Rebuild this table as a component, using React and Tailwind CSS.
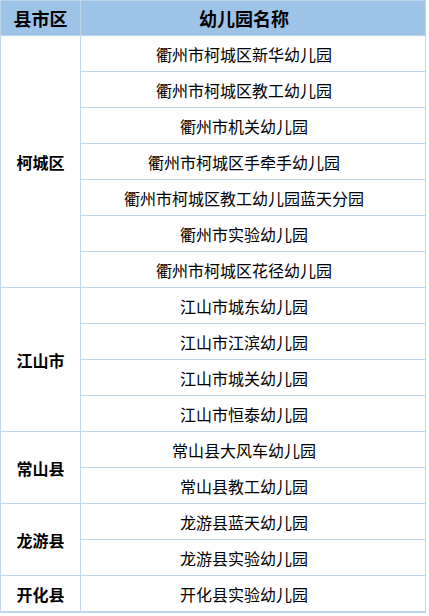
const groups = [
  { name: "柯城区", items: ["衢州市柯城区新华幼儿园", "衢州市柯城区教工幼儿园", "衢州市机关幼儿园", "衢州市柯城区手牵手幼儿园", "衢州市柯城区教工幼儿园蓝天分园", "衢州市实验幼儿园", "衢州市柯城区花径幼儿园"] },
  { name: "江山市", items: ["江山市城东幼儿园", "江山市江滨幼儿园", "江山市城关幼儿园", "江山市恒泰幼儿园"] },
  { name: "常山县", items: ["常山县大风车幼儿园", "常山县教工幼儿园"] },
  { name: "龙游县", items: ["龙游县蓝天幼儿园", "龙游县实验幼儿园"] },
  { name: "开化县", items: ["开化县实验幼儿园"] },
];

export default function App() {
  return (
    <div className="w-[429px] h-[616px] bg-white" style={{ fontFamily: '"Noto Sans CJK SC", "Noto Sans", sans-serif' }}>
      <div className="w-[426px] border border-[#bdd7ee] text-black">
        <div className="flex h-[35px] bg-[#9dc3e6] border-b border-[#bdd7ee]">
          <div className="w-[80px] border-r border-[#bdd7ee] flex items-center justify-center text-[18px] font-bold">县市区</div>
          <div className="flex-1 flex items-center justify-center pr-[18px] text-[18px] font-bold">幼儿园名称</div>
        </div>
        {groups.map((g) => (
          <div key={g.name} className="flex">
            <div className="w-[80px] border-r border-b border-[#bdd7ee] flex items-center justify-center text-[16px] font-bold">{g.name}</div>
            <div className="flex-1 flex flex-col">
              {g.items.map((it) => (
                <div key={it} className="h-[36px] border-b border-[#bdd7ee] flex items-center justify-center pr-[18px] text-[16px]">{it}</div>
              ))}
            </div>
          </div>
        ))}
      </div>
    </div>
  );
}
